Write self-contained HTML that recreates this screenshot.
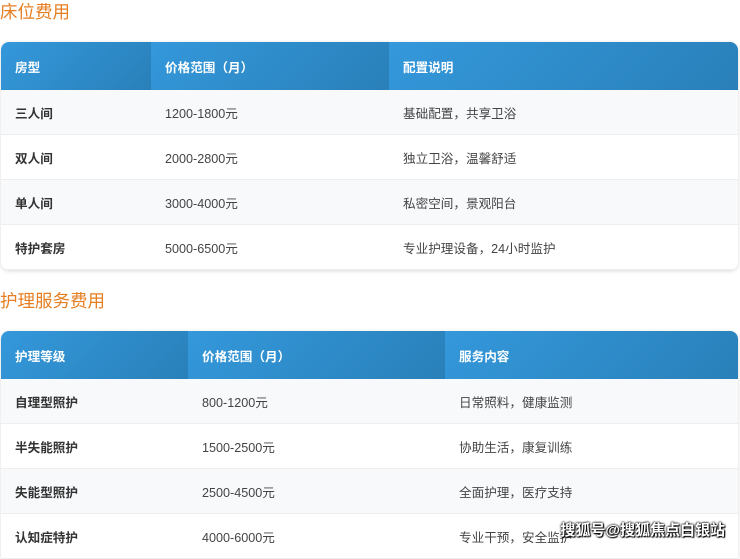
<!DOCTYPE html>
<html><head><meta charset="utf-8"><style>
body{margin:0;background:#fff;font-family:"Liberation Sans","Noto Sans CJK SC",sans-serif;width:740px;height:547px;overflow:hidden;position:relative}
h2{position:absolute;left:0;margin:0;font-weight:normal;color:#e67e22;font-size:17.5px;line-height:24px}
table{position:absolute;left:1px;width:737px;border-collapse:collapse;border-radius:8px;overflow:hidden;box-shadow:0 1px 4px rgba(0,0,0,.15);font-size:12.6px}
th{height:48px;padding:0 0 0 14px;text-align:left;color:#fff;font-weight:bold;background:linear-gradient(135deg,#3498db,#2980b9)}
td{height:44px;padding:0 0 0 14px;color:#444;border-bottom:1px solid #eee}
td:first-child{font-weight:bold;color:#333}
tr:nth-child(odd) td{background:#f7f9fb}
tr:nth-child(even) td{background:#fff}
.wm{position:absolute;right:15px;top:519px;font-size:15px;color:#fff;font-weight:bold;text-shadow:0 0 2px #000,0 0 2px #000,1px 1px 1px #000}
</style></head><body>
<h2 style="top:0">床位费用</h2>
<table style="top:42px">
<thead><tr><th style="width:136px">房型</th><th style="width:224px">价格范围（月）</th><th>配置说明</th></tr></thead>
<tbody>
<tr><td>三人间</td><td>1200-1800元</td><td>基础配置，共享卫浴</td></tr>
<tr><td>双人间</td><td>2000-2800元</td><td>独立卫浴，温馨舒适</td></tr>
<tr><td>单人间</td><td>3000-4000元</td><td>私密空间，景观阳台</td></tr>
<tr><td>特护套房</td><td>5000-6500元</td><td>专业护理设备，24小时监护</td></tr>
</tbody></table>
<h2 style="top:289px">护理服务费用</h2>
<table style="top:331px;border-bottom-left-radius:0;border-bottom-right-radius:0">
<thead><tr><th style="width:173px">护理等级</th><th style="width:243px">价格范围（月）</th><th>服务内容</th></tr></thead>
<tbody>
<tr><td>自理型照护</td><td>800-1200元</td><td>日常照料，健康监测</td></tr>
<tr><td>半失能照护</td><td>1500-2500元</td><td>协助生活，康复训练</td></tr>
<tr><td>失能型照护</td><td>2500-4500元</td><td>全面护理，医疗支持</td></tr>
<tr><td>认知症特护</td><td>4000-6000元</td><td>专业干预，安全监护</td></tr>
</tbody></table>
<div class="wm">搜狐号@搜狐焦点白银站</div>
</body></html>
